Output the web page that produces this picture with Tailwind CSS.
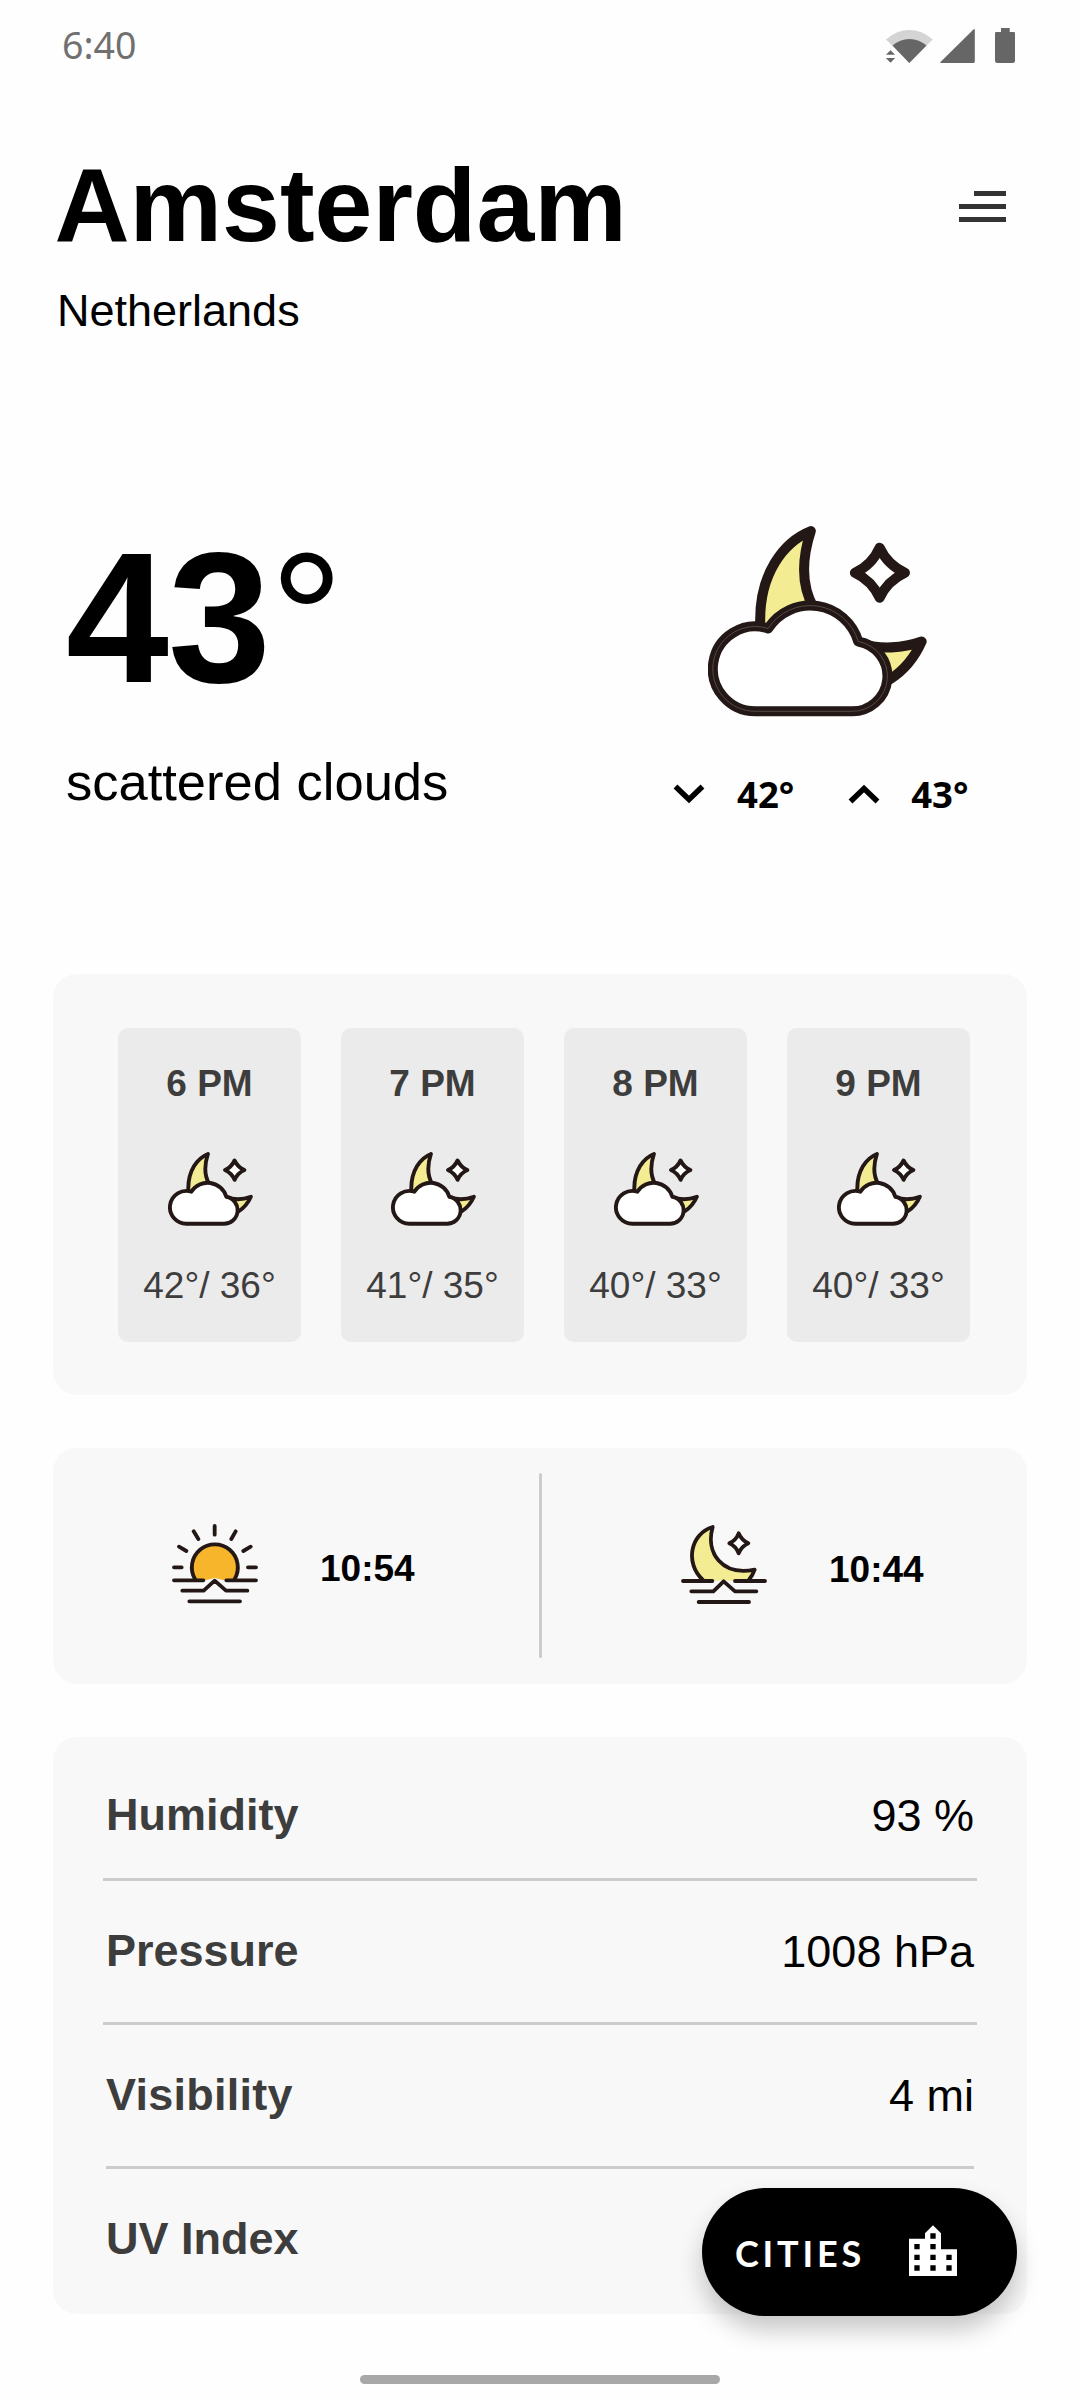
<!DOCTYPE html>
<html lang="en">
<head>
<meta charset="utf-8">
<title>Weather</title>
<script src="https://cdn.jsdelivr.net/npm/@tailwindcss/browser@4"></script>
</head>
<body class="bg-[#fefefe]">
<svg class="hidden">
  <symbol id="night-cloud" viewBox="145 79 656 572">
    <g stroke="#231815" stroke-width="30" stroke-linejoin="round" stroke-linecap="round">
      <path fill="#f4ec93" d="M453 94C375 125 293 220 302 385L330 400L462 325C425 260 425 180 453 94Z"/>
      <path fill="#f4ec93" d="M600 430C660 450 730 445 785 425C765 470 735 510 690 538Z"/>
      <path fill="#fff" d="M287 634H573A105.3 105.3 0 0 0 595 425A150 150 0 0 0 325 386A127 127 0 1 0 287 634Z"/>
      <path fill="#fff" d="M659 144Q683 196 735 219Q683 243 659 294Q636 243 585 219Q636 196 659 144Z"/>
    </g>
  </symbol>
</svg>
<div class="relative flex h-[2400px] w-[1080px] flex-col overflow-hidden font-['Liberation_Sans',Arial,sans-serif] text-black">
  <!-- status bar -->
  <div class="flex h-[153px] shrink-0 items-start justify-between pl-[62px] pr-[64px] pt-[26px]">
    <div class="font-['Noto_Sans','Open_Sans',sans-serif] text-[37.500px] font-normal leading-none text-[#707070]">6:40</div>
    <svg class="h-10 w-[132px]" viewBox="884 26 132 40" fill="#666">
      <path fill="#d4d4d4" d="M909.3 63L886 39.5A33.5 33.5 0 0 1 932.7 39.5Z"/>
      <path d="M909.3 63L892.5 45.6A25 25 0 0 1 926.5 45.6Z"/>
      <path fill="#fefefe" d="M883 46.500h9.800l13 16.500v3H883Z"/>
      <path d="M890.500 50.300l4.600 4.500h-9.200ZM890.500 62.700l4.600-4.600h-9.200Z"/>
      <path d="M973.700 29.300q1.100-.8 1.100.8V61.500q0 1.500-1.500 1.500H941q-1.500 0-.5-1Z"/>
      <path d="M1001 28h8.700v4h4q1.300 0 1.300 1.300V60.500q0 2.500-2.500 2.500h-15q-2.500 0-2.500-2.500V33.300q0-1.300 1.300-1.300h4.700Z"/>
    </svg>
  </div>

  <!-- location -->
  <div class="flex h-[373px] shrink-0 items-start justify-between pl-[54.500px] pr-[74px]">
    <div>
      <h1 class="text-[104px] font-bold leading-none">Amsterdam</h1>
      <p class="mt-[31px] pl-[2.500px] text-[45px] leading-none">Netherlands</p>
    </div>
    <div class="mt-[38px] flex w-[47px] flex-col items-end gap-2">
      <div class="h-[5px] w-8 bg-[#333]"></div>
      <div class="h-[5px] w-full bg-[#333]"></div>
      <div class="h-[5px] w-full bg-[#333]"></div>
    </div>
  </div>

  <!-- current conditions -->
  <div class="flex h-[448px] shrink-0 justify-between pl-[66px] pr-[112px]">
    <div>
      <div class="text-[185px] font-bold leading-none tracking-[-1px]">43<span class="font-normal">°</span></div>
      <p class="mt-[45px] text-[52.500px] leading-none">scattered clouds</p>
    </div>
    <div class="flex w-[295px] flex-col">
      <svg class="ml-[35px] h-[191px] w-[219px]" viewBox="145 79 656 572">
        <use href="#night-cloud" x="145" y="79" width="656" height="572"/>
        <path fill="none" stroke="#6b605d" stroke-width="2" d="M287 634H573A105.300 105.300 0 0 0 595 425A150 150 0 0 0 325 386A127 127 0 1 0 287 634Z"/>
      </svg>
      <div class="mt-[58px] flex items-center whitespace-nowrap font-['Noto_Sans','Open_Sans',sans-serif] text-[36.500px] font-bold leading-none">
        <svg class="h-5 w-8 shrink-0" viewBox="0 0 32 20" fill="none" stroke="#000" stroke-width="5.500"><path d="M2.500 2.500L16 15.500L29.500 2.500"/></svg>
        <span class="ml-8">42°</span>
        <svg class="ml-[54px] h-5 w-8 shrink-0" viewBox="0 0 32 20" fill="none" stroke="#000" stroke-width="5.500"><path d="M2.500 17.500L16 4.500L29.500 17.500"/></svg>
        <span class="ml-[31px] mt-px">43°</span>
      </div>
    </div>
  </div>

  <!-- hourly forecast -->
  <div class="mx-[53px] flex h-[421px] shrink-0 gap-10 rounded-3xl bg-[#f8f8f8] pl-[65px] pt-[54px]">
    <div class="flex h-[314px] w-[183px] flex-col items-center rounded-[10px] bg-[#ebebeb] pt-[37px] text-[37px] leading-none text-[#3d3d3d]">
      <div class="font-bold">6 PM</div><svg class="ml-[2px] mt-[50px] h-[74px] w-[85px]"><use href="#night-cloud"/></svg><div class="mt-[41px]">42°/ 36°</div>
    </div>
    <div class="flex h-[314px] w-[183px] flex-col items-center rounded-[10px] bg-[#ebebeb] pt-[37px] text-[37px] leading-none text-[#3d3d3d]">
      <div class="font-bold">7 PM</div><svg class="ml-[2px] mt-[50px] h-[74px] w-[85px]"><use href="#night-cloud"/></svg><div class="mt-[41px]">41°/ 35°</div>
    </div>
    <div class="flex h-[314px] w-[183px] flex-col items-center rounded-[10px] bg-[#ebebeb] pt-[37px] text-[37px] leading-none text-[#3d3d3d]">
      <div class="font-bold">8 PM</div><svg class="ml-[2px] mt-[50px] h-[74px] w-[85px]"><use href="#night-cloud"/></svg><div class="mt-[41px]">40°/ 33°</div>
    </div>
    <div class="flex h-[314px] w-[183px] flex-col items-center rounded-[10px] bg-[#ebebeb] pt-[37px] text-[37px] leading-none text-[#3d3d3d]">
      <div class="font-bold">9 PM</div><svg class="ml-[2px] mt-[50px] h-[74px] w-[85px]"><use href="#night-cloud"/></svg><div class="mt-[41px]">40°/ 33°</div>
    </div>
  </div>

  <!-- sunrise and sunset -->
  <div class="mx-[53px] mt-[53px] flex h-[236px] shrink-0 rounded-3xl bg-[#f8f8f8] text-[37px] font-bold leading-none">
    <div class="flex w-[486px] items-start pl-[119px] pt-[76px]">
      <svg class="h-20 w-[86px]" viewBox="398 283 258 240" fill="none" stroke="#231815" stroke-width="11.500" stroke-linecap="round" stroke-linejoin="round">
        <path fill="#f7b52c" stroke="none" d="M467 452A69 69 0 1 1 586 452H554L526 445L498 452Z"/>
        <path d="M467 448A69 69 0 1 1 586 448"/>
        <path d="M404 452H492M561 452H650M429 483H493L526 453L560 483H624M450 515H602"/>
        <path d="M526 289V315M463 305L477 328M589 305L576 328M419 351L441 364M634 351L612 364M404 413H427M626 413H650"/>
      </svg>
      <span class="ml-[62px] mt-[26px]">10:54</span>
    </div>
    <div class="mt-[25px] h-[185px] w-[3px] rounded-full bg-[#ccc]"></div>
    <div class="flex items-start pl-[139px] pt-[77px]">
      <svg class="h-20 w-[86px]" viewBox="452 286 258 240" fill="none" stroke="#231815" stroke-width="11.500" stroke-linecap="round" stroke-linejoin="round">
        <path fill="#f4ec93" stroke="none" d="M547 292C480 312 463 405 519 454H553L580 452L607 454H655L673 420C575 440 525 370 547 292Z"/>
        <path d="M517 450C463 400 480 312 547 292C525 370 575 440 673 420Q667 437 656 450"/>
        <path fill="#fff" d="M625 311Q634 332 654 341Q634 350 625 371Q617 350 597 341Q617 332 625 311Z"/>
        <path d="M458 454H546M614 454H704M483 485H549L580 455L614 485H678M505 517H656"/>
      </svg>
      <span class="ml-[62px] mt-[26px]">10:44</span>
    </div>
  </div>

  <!-- details -->
  <div class="mx-[53px] mt-[53px] h-[577px] shrink-0 rounded-3xl bg-[#f8f8f8] px-[50px] text-[45px] leading-none">
    <div class="flex h-[144px] items-start justify-between border-b-[3px] border-[#ccc] pl-[3px] pr-[3px] pt-[55px]"><b class="text-[#3d3d3d]">Humidity</b><span class="mt-px">93 %</span></div>
    <div class="flex h-[144px] items-start justify-between border-b-[3px] border-[#ccc] pl-[3px] pr-[3px] pt-[47px]"><b class="text-[#3d3d3d]">Pressure</b><span class="mt-px">1008 hPa</span></div>
    <div class="mx-[3px] flex h-[144px] items-start justify-between border-b-[3px] border-[#ccc] pt-[47px]"><b class="tracking-[0.250px] text-[#3d3d3d]">Visibility</b><span class="mt-px">4 mi</span></div>
    <div class="px-[3px] pt-[47px]"><b class="text-[#3d3d3d]">UV Index</b></div>
  </div>

  <!-- floating button -->
  <div class="absolute left-[702px] top-[2188px] flex h-[128px] w-[315px] items-center rounded-full bg-black pl-[33px] text-white shadow-[0_14px_24px_rgba(0,0,0,0.22)]">
    <span class="mt-[2px] w-[133px] font-[Lato,sans-serif] text-[36px] font-bold leading-none tracking-[3.800px]">CITIES</span>
    <svg class="ml-[33px] h-16 w-16" viewBox="0 0 24 24" fill="#fff"><path d="M19 15H17V13H19M19 19H17V17H19M13 7H11V5H13M13 11H11V9H13M13 15H11V13H13M13 19H11V17H13M7 11H5V9H7M7 15H5V13H7M7 19H5V17H7M15 11V5L12 2L9 5V7H3V21H21V11H15Z"/></svg>
  </div>

  <!-- home indicator -->
  <div class="absolute left-[360px] top-[2375px] h-[9px] w-[360px] rounded-full bg-[#a8a8a8]"></div>
</div>
</body>
</html>
